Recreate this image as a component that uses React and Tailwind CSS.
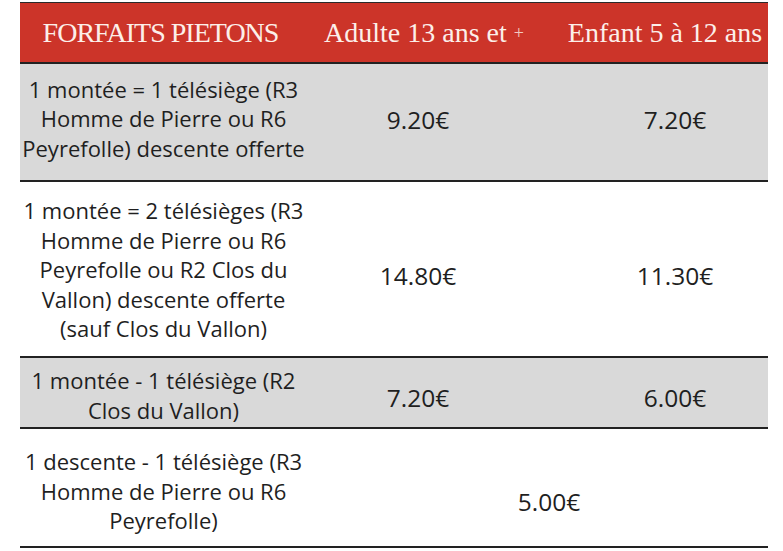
const rows = [
  {
    label: ["1 montée = 1 télésiège (R3", "Homme de Pierre ou R6", "Peyrefolle) descente offerte"],
    adult: "9.20€",
    child: "7.20€",
    h: "h-[118px]",
    bg: "bg-[#d9d9d9]",
    lp: "pb-[6px]",
    pp: "pb-[4px]",
  },
  {
    label: [
      "1 montée = 2 télésièges (R3",
      "Homme de Pierre ou R6",
      "Peyrefolle ou R2 Clos du",
      "Vallon) descente offerte",
      "(sauf Clos du Vallon)",
    ],
    adult: "14.80€",
    child: "11.30€",
    h: "h-[176px]",
    bg: "bg-white",
    lp: "pt-[2px]",
    pp: "pt-[14px]",
  },
  {
    label: ["1 montée - 1 télésiège (R2", "Clos du Vallon)"],
    adult: "7.20€",
    child: "6.00€",
    h: "h-[71px]",
    bg: "bg-[#d9d9d9]",
    lp: "pt-[6px]",
    pp: "pt-[12px]",
  },
  {
    label: ["1 descente - 1 télésiège (R3", "Homme de Pierre ou R6", "Peyrefolle)"],
    both: "5.00€",
    h: "h-[119px]",
    bg: "bg-white",
    lp: "pt-[8px]",
    pp: "pt-[30px]",
  },
];

const body = { fontFamily: '"Open Sans", sans-serif' };
const serif = { fontFamily: '"Liberation Serif", serif' };

export default function App() {
  return (
    <div className="w-[783px] h-[551px] bg-white pl-[20px] pt-[2px] overflow-hidden">
      <div className="w-[748px] border-t border-[#2a2a2a]">
        {/* Header */}
        <div
          className="h-[61px] bg-[#cc3429] flex items-center text-[#fcefe9] text-[28px] leading-none border-b-2 border-[#222]"
          style={serif}
        >
          <div className="w-[287px] text-center tracking-[-1px] pr-[6px]">FORFAITS PIETONS</div>
          <div className="w-[222px] text-center pl-[12px]">
            Adulte 13 ans et <span className="text-[18px] opacity-80 align-[3px]">+</span>
          </div>
          <div className="w-[239px] text-center pl-[33px]">Enfant 5 à 12 ans</div>
        </div>

        {rows.map((r, i) => (
          <div
            key={i}
            className={`${r.h} ${r.bg} flex items-center text-[#1f1f1f] border-b-2 border-[#222]`}
            style={body}
          >
            <div className={`w-[287px] text-center text-[22px] leading-[29.5px] ${r.lp}`}>
              {r.label.map((l, j) => (
                <div key={j}>{l}</div>
              ))}
            </div>
            {r.both ? (
              <div className={`w-[461px] text-center text-[24.5px] pl-[23px] ${r.pp}`}>{r.both}</div>
            ) : (
              <>
                <div className={`w-[222px] text-center text-[24.5px] ${r.pp}`}>{r.adult}</div>
                <div className={`w-[239px] text-center text-[24.5px] pl-[53px] ${r.pp}`}>{r.child}</div>
              </>
            )}
          </div>
        ))}
      </div>
    </div>
  );
}
